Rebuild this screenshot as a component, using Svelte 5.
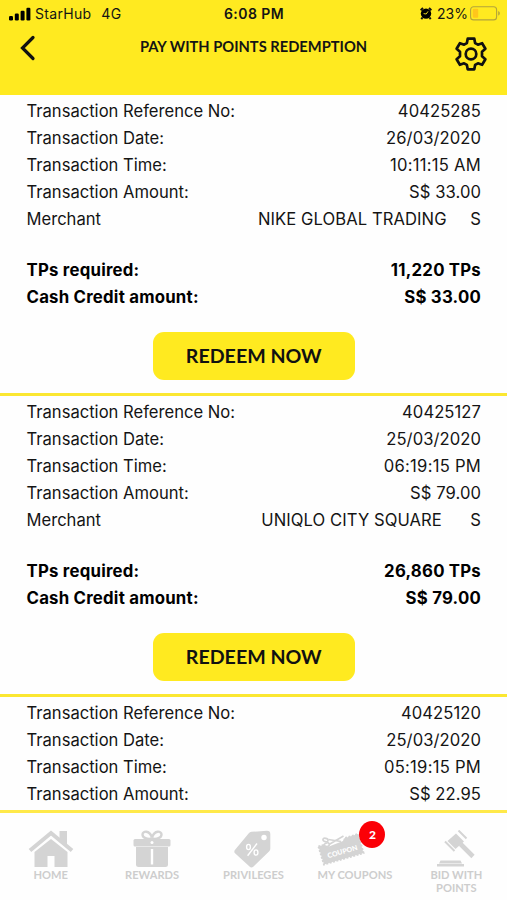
<script lang="ts">
	interface Transaction {
		reference: string;
		date: string;
		time: string;
		amount: string;
		merchant: string;
		points: string;
	}

	const transactions: Transaction[] = [
		{
			reference: '40425285',
			date: '26/03/2020',
			time: '10:11:15 AM',
			amount: 'S$ 33.00',
			merchant: 'NIKE GLOBAL TRADING     S',
			points: '11,220 TPs'
		},
		{
			reference: '40425127',
			date: '25/03/2020',
			time: '06:19:15 PM',
			amount: 'S$ 79.00',
			merchant: 'UNIQLO CITY SQUARE      S',
			points: '26,860 TPs'
		},
		{
			reference: '40425120',
			date: '25/03/2020',
			time: '05:19:15 PM',
			amount: 'S$ 22.95',
			merchant: '',
			points: ''
		}
	];
</script>

<div class="screen">
	<header>
		<div class="status">
			<div class="carrier">
				<svg width="22" height="14" viewBox="0 0 22 14">
					<rect x="0" y="9" width="4" height="4.5" rx="1.2" />
					<rect x="5.8" y="6.5" width="4" height="7" rx="1.2" />
					<rect x="11.6" y="3.8" width="4" height="9.7" rx="1.2" />
					<rect x="17.4" y="0.8" width="4" height="12.7" rx="1.2" />
				</svg>
				<span class="network">StarHub</span>
				<span>4G</span>
			</div>
			<div class="clock">6:08 PM</div>
			<div class="power">
				<svg class="alarm" width="12" height="13" viewBox="0 0 12 13">
					<path d="M.6 3.2 3 1M11.4 3.2 9 1M2.5 10.5 1.3 12.1M9.5 10.5l1.2 1.6" stroke="#111" stroke-width="2" />
					<circle cx="6" cy="6.6" r="5.2" />
					<path d="M6.2 7 3.6 6.6M6.2 7 8 4.4" fill="none" stroke="#ffea20" stroke-width="0.9" />
				</svg>
				<span>23%</span>
				<svg class="battery" width="31" height="15" viewBox="0 0 31 15">
					<rect x=".6" y=".7" width="26" height="13.2" rx="3" fill="none" stroke="#b3a43b" stroke-width="1.1" />
					<rect x="2.8" y="2.8" width="5.4" height="9" rx="1" fill="#ffc61c" />
					<path d="M28.2 5v4.6c2.2-.8 2.2-3.8 0-4.6Z" fill="#b3a43b" />
				</svg>
			</div>
		</div>
		<div class="title-bar">
			<button class="icon back" aria-label="Back">
				<svg width="16" height="26" viewBox="0 0 16 26">
					<path d="M13 2.5 2.5 13 13 23.5" fill="none" stroke="#111" stroke-width="3.2" stroke-linecap="round" />
				</svg>
			</button>
			<h1>PAY WITH POINTS REDEMPTION</h1>
			<button class="icon settings" aria-label="Settings">
				<svg width="34" height="34" viewBox="0 0 34 34">
					<path
						d="M13.7 1.7h6.6l.8 4.4 2.8 1.6 4.2-1.5 3.3 5.6-3.4 2.9v4.6l3.4 2.9-3.3 5.6-4.2-1.5-2.8 1.6-.8 4.4h-6.6l-.8-4.4-2.8-1.6-4.2 1.5-3.3-5.6L6 19.3v-4.6l-3.4-2.9 3.3-5.6 4.2 1.5 2.8-1.6Z"
						fill="none"
						stroke="#111"
						stroke-width="2.7"
						stroke-linejoin="round"
					/>
					<circle cx="17" cy="17" r="5.3" fill="none" stroke="#111" stroke-width="2.7" />
				</svg>
			</button>
		</div>
	</header>

	<main>
		{#each transactions as item}
			<section>
				<dl>
					<div class="row"><dt>Transaction Reference No:</dt><dd>{item.reference}</dd></div>
					<div class="row"><dt>Transaction Date:</dt><dd>{item.date}</dd></div>
					<div class="row"><dt>Transaction Time:</dt><dd class="time">{item.time}</dd></div>
					<div class="row"><dt>Transaction Amount:</dt><dd>{item.amount}</dd></div>
					{#if item.merchant}
						<div class="row"><dt>Merchant</dt><dd>{item.merchant}</dd></div>
					{/if}
				</dl>
				{#if item.points}
					<dl class="total">
						<div class="row"><dt>TPs required:</dt><dd>{item.points}</dd></div>
						<div class="row"><dt>Cash Credit amount:</dt><dd>{item.amount}</dd></div>
					</dl>
					<button class="redeem">REDEEM NOW</button>
				{/if}
			</section>
		{/each}
	</main>

	<nav>
		<a href="#home">
			<svg width="46" height="38" viewBox="0 0 46 38">
				<path d="M31.5 1h7.5v15l-7.5-6.5Z" />
				<path d="M2 20.5 23 3l21 17.5" fill="none" stroke="#d4d4d4" stroke-width="4" />
				<path d="M6.5 22 23 9l16.5 13v15H26.5V26h-7v11h-13Z" />
			</svg>
			<span>HOME</span>
		</a>
		<a href="#rewards">
			<svg width="46" height="38" viewBox="0 0 46 38">
				<g fill="none" stroke="#d4d4d4" stroke-width="2.4">
					<path d="M23 8.5C18.5 9.5 13.5 8 13.5 4.500S20.500-.5 23 7.500" />
					<path d="M23 8.5C27.500 9.500 32.500 8 32.500 4.500S25.500-.5 23 7.500" />
				</g>
				<rect x="4.5" y="9" width="37" height="7.5" rx="1.5" />
				<path d="M7 17h32v17.500c0 1.700-1 2.500-2.500 2.500h-27C8 37 7 36.200 7 34.500Z" />
				<path d="M23 19v15.500" stroke="#fff" stroke-width="2.4" />
				<circle cx="23" cy="12.500" r="1.500" fill="#fff" />
			</svg>
			<span>REWARDS</span>
		</a>
		<a href="#privileges">
			<svg width="46" height="38" viewBox="0 0 46 38">
				<path d="M21.5 1.8 37 .8c2.3 0 3.3 1.1 3.3 3.2v14.2c0 1.2-.3 2.3-1.3 3.3L23.5 36.4c-1.4 1.3-2.8 1.3-4 0L5.3 23.6c-1.4-1.3-1.3-2.7 0-4L18.8 3.3c.7-.9 1.6-1.4 2.7-1.5Z" />
				<circle cx="34" cy="7.5" r="2.7" fill="#fff" />
				<g fill="none" stroke="#fff" stroke-width="1.4">
					<ellipse cx="18.5" cy="17" rx="1.9" ry="2.6" />
					<ellipse cx="26" cy="22.5" rx="1.9" ry="2.6" />
					<path d="m27 13.5-9.4 12.3" />
				</g>
			</svg>
			<span>PRIVILEGES</span>
		</a>
		<a href="#coupons">
			<div class="coupon">
				<svg width="50" height="38" viewBox="0 0 50 38">
					<path
						d="M2.5 16.5 42 4l5.5 19L8 34.5Z"
						stroke="#d4d4d4"
						stroke-width="2"
						stroke-dasharray="2 1.5"
					/>
					<path d="m6 14 6-7 17-2-2 6-14 5.5Z" fill="#fff" />
					<g fill="none" stroke="#d4d4d4" stroke-width="1.6">
						<path d="m13 14.5 14.5-8.5M12.5 9.5l12.5 2" />
						<ellipse cx="10.5" cy="15" rx="3" ry="1.8" transform="rotate(-25 10.5 15)" />
						<ellipse cx="9.5" cy="10" rx="2.6" ry="1.7" transform="rotate(15 9.5 10)" />
					</g>
					<text x="26.5" y="24" transform="rotate(-16 26.5 21.5)" text-anchor="middle">COUPON</text>
				</svg>
				<b class="badge">2</b>
			</div>
			<span>MY COUPONS</span>
		</a>
		<a href="#bid">
			<svg width="46" height="38" viewBox="0 0 46 38">
				<path d="m14.5 11 8.5-7.5 8 8-8.5 7.5Z" />
				<path d="m12 11.5 9.5 9.5M25.5.5l8 8" stroke="#d4d4d4" stroke-width="2" />
				<path d="m27.5 14 12.5 12.5" stroke="#d4d4d4" stroke-width="4.6" />
				<path d="M7.5 30.5h20l1.5 3H6ZM4 34h27v2.5H4Z" />
			</svg>
			<span>BID WITH<br />POINTS</span>
		</a>
	</nav>
</div>

<style>
	:global(body) {
		background: #fefefe;
	}

	.screen {
		display: flex;
		flex-direction: column;
		width: 507px;
		height: 900px;
		overflow: hidden;
		background: #fefefe;
		color: #141414;
		font-family: Inter, 'Liberation Sans', sans-serif;
	}

	button {
		padding: 0;
		border: none;
		font: inherit;
		color: inherit;
		cursor: pointer;
	}

	header {
		flex: none;
		height: 94.5px;
		background: #ffea20;
	}

	.status {
		display: grid;
		grid-template-columns: 1fr auto 1fr;
		align-items: center;
		height: 27px;
		padding: 0 6px 0 9px;
		font-size: 14px;
	}

	.carrier,
	.power {
		display: flex;
		align-items: center;
	}

	.carrier {
		letter-spacing: 0.3px;
	}

	.power {
		justify-content: flex-end;
	}

	svg {
		display: block;
		flex: none;
	}

	.network {
		margin: 0 10px 0 4px;
	}

	.clock {
		margin-right: 2px;
		font-weight: 600;
		letter-spacing: 0.45px;
	}

	.alarm {
		margin-right: 5px;
	}

	.battery {
		margin-left: 2px;
	}

	.title-bar {
		display: grid;
		grid-template-columns: 54px 1fr 54px;
		align-items: start;
	}

	.icon {
		background: none;
	}

	.back {
		margin: 8px 0 0 20px;
	}

	.settings {
		margin: 10px 0 0 1px;
	}

	h1 {
		margin: 10px 0 0;
		font-family: Lato, sans-serif;
		font-size: 14.7px;
		font-weight: 700;
		line-height: 18px;
		text-align: center;
	}

	main {
		flex: 1;
		min-height: 0;
		overflow: hidden;
	}

	section {
		box-sizing: border-box;
		padding: 3.7px 26px 12.8px 26.5px;
		border-bottom: 3px solid #fbe731;
	}

	section:last-child {
		border-bottom: none;
	}

	dl {
		margin: 0;
	}

	.row {
		display: flex;
		justify-content: space-between;
		height: 26.9px;
		font-size: 16.6px;
		line-height: 26.9px;
	}

	.total {
		margin-top: 24.3px;
		font-weight: 700;
		color: #000;
	}

	.total .row {
		font-size: 16.8px;
		letter-spacing: 0.22px;
	}

	dd {
		margin: 0;
		white-space: pre;
	}

	.row dd {
		letter-spacing: 0.07px;
	}

	.row .time {
		letter-spacing: 0.25px;
	}

	.total .row dd {
		letter-spacing: 0.22px;
	}

	.redeem {
		display: block;
		width: 202px;
		height: 47.5px;
		margin: 21.5px auto 0;
		border-radius: 11px;
		background: #ffea20;
		color: #111;
		font-family: Lato, sans-serif;
		font-size: 19.6px;
		font-weight: 700;
	}

	nav {
		display: grid;
		flex: none;
		grid-template-columns: repeat(5, 1fr);
		box-sizing: border-box;
		height: 90px;
		padding-top: 17px;
		border-top: 3px solid #ffe94a;
		background: #fefefe;
	}

	nav a {
		display: flex;
		flex-direction: column;
		align-items: center;
		color: #cdcdcd;
		font-family: Lato, sans-serif;
		font-size: 11.1px;
		font-weight: 700;
		line-height: 13px;
		text-align: center;
		text-decoration: none;
	}

	nav svg {
		fill: #d4d4d4;
	}

	.coupon {
		position: relative;
		margin-right: 27px;
	}

	.coupon text {
		fill: #fff;
		font-size: 7px;
		font-weight: 900;
	}

	.badge {
		position: absolute;
		top: -9px;
		right: -19px;
		width: 26px;
		height: 27px;
		border-radius: 50%;
		background: #fb0007;
		color: #fff;
		font-size: 12px;
		line-height: 27px;
	}
</style>
